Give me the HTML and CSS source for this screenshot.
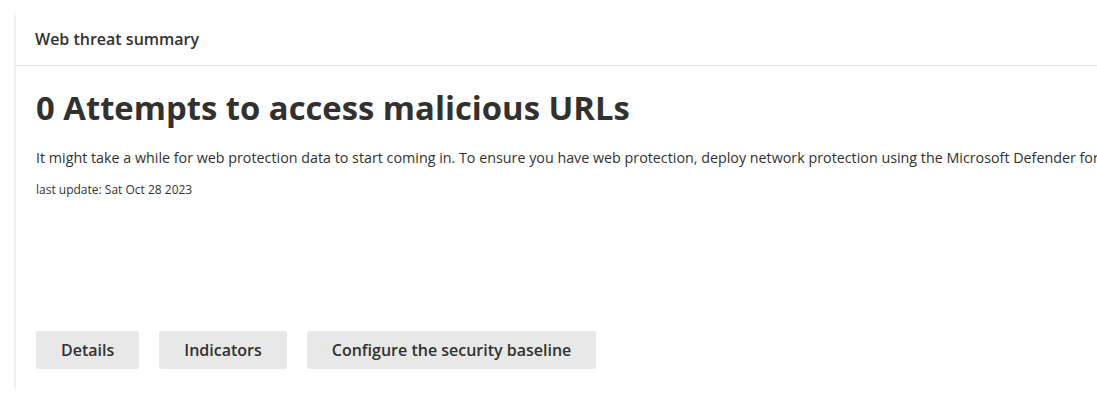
FILE: index.html
```html
<!DOCTYPE html>
<html>
<head>
<meta charset="utf-8">
<link rel="stylesheet" href="styles.css">
</head>
<body>
<div class="page">
  <section class="card">
    <header class="card-header">Web threat summary</header>
    <div class="card-body">
      <h1 class="title">0 Attempts to access malicious URLs</h1>
      <p class="desc">It might take a while for web protection data to start coming in. To ensure you have web protection, deploy network protection using the Microsoft Defender for</p>
      <p class="update">last update: Sat Oct 28 2023</p>
      <div class="actions">
        <button class="btn">Details</button>
        <button class="btn">Indicators</button>
        <button class="btn">Configure the security baseline</button>
      </div>
    </div>
  </section>
</div>
</body>
</html>
```
FILE: styles.css
```css
html, body {
  margin: 0;
  padding: 0;
  background: #ffffff;
  overflow: hidden;
}
body {
  font-family: "Open Sans", "Noto Sans", sans-serif;
  color: #323130;
}
.page {
  padding: 13px 0 0 16px;
  width: 1200px;
}
.card {
  width: 1200px;
  height: 376px;
  background: #fff;
  box-shadow: 0 1.6px 3.6px rgba(0,0,0,0.16), 0 0.3px 0.9px rgba(0,0,0,0.12);
  display: flex;
  flex-direction: column;
}
.card-header {
  height: 53px;
  box-sizing: border-box;
  padding: 0 19px;
  display: flex;
  align-items: center;
  font-size: 16px;
  font-weight: 600;
  border-bottom: 1px solid #e1dfdd;
}
.card-body {
  flex: 1;
  display: flex;
  flex-direction: column;
  padding: 20px 19px 20px 20px;
}
.title {
  margin: 0;
  font-size: 32.8px;
  line-height: 44px;
  font-weight: 700;
  white-space: nowrap;
}
.desc {
  margin: 18px 0 0;
  font-size: 14.3px;
  line-height: 20px;
  white-space: nowrap;
}
.update {
  margin: 14px 0 0;
  font-size: 12px;
  line-height: 16px;
}
.actions {
  margin-top: auto;
  display: flex;
  gap: 20px;
}
.btn {
  font-family: inherit;
  font-size: 16px;
  font-weight: 600;
  color: #323130;
  background: #e8e8e8;
  border: none;
  border-radius: 2px;
  height: 38px;
  padding: 0 25px;
}
```
